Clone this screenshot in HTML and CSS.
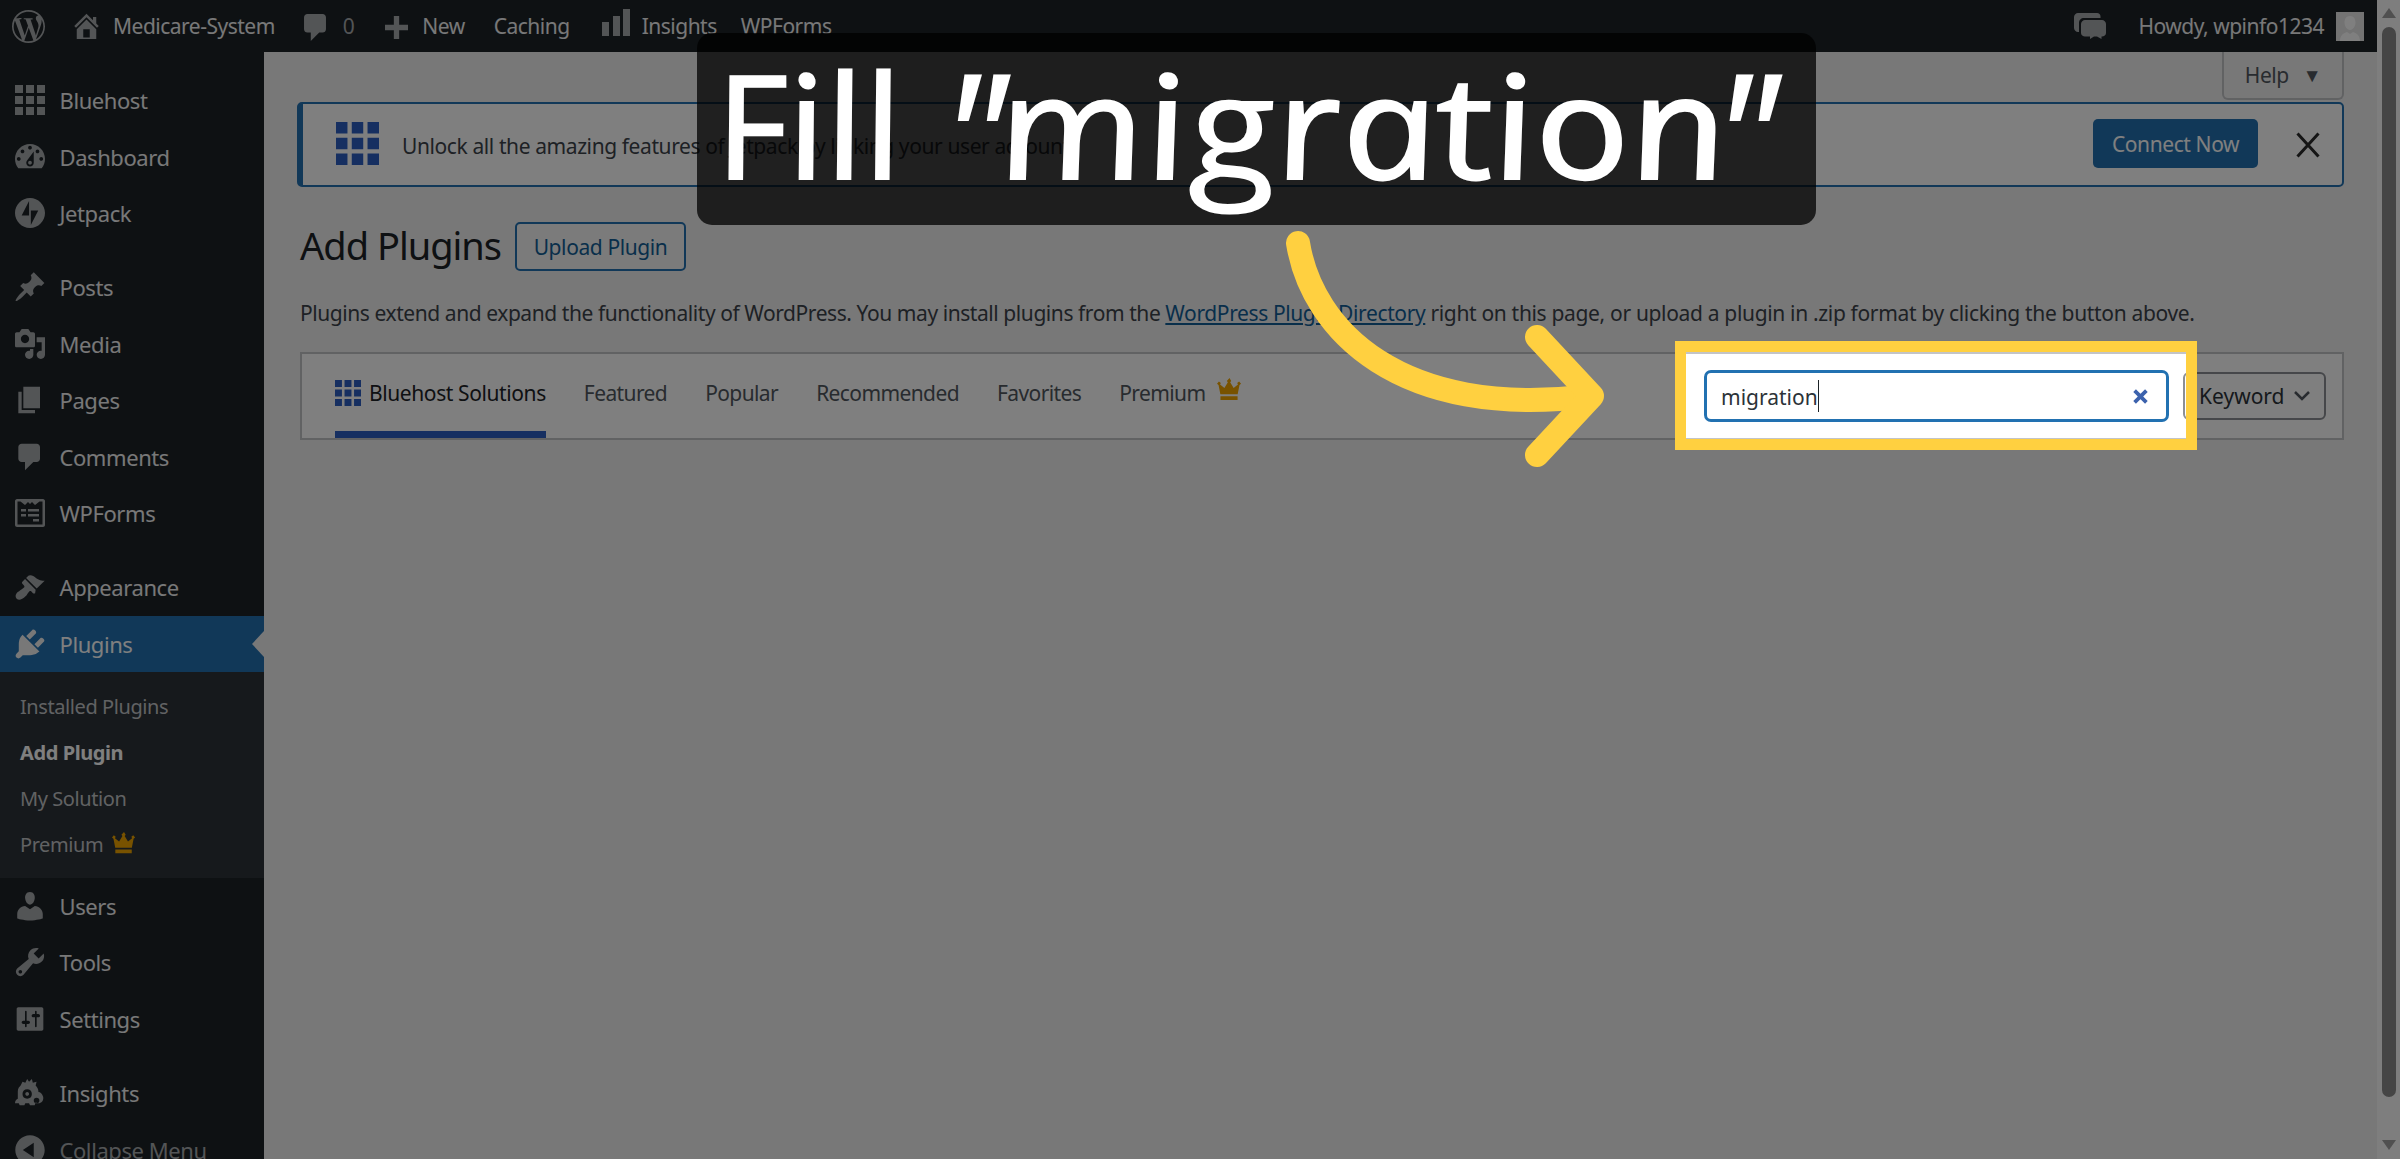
FILE: index.html
```html
<!DOCTYPE html>
<html lang="en">
<head>
<meta charset="utf-8">
<title>Add Plugins</title>
<link rel="stylesheet" href="styles.css">
</head>
<body>
<svg class="defs" aria-hidden="true">
  <symbol id="i-grid" viewBox="0 0 30 30"><path d="M0 0h8v8H0zM11 0h8v8h-8zM22 0h8v8h-8zM0 11h8v8H0zM11 11h8v8h-8zM22 11h8v8h-8zM0 22h8v8H0zM11 22h8v8h-8zM22 22h8v8h-8z"/></symbol>
  <symbol id="i-crown" viewBox="0 0 26 26"><path d="M13 0l1.8 3-1.1 1.4 3.6 6 4.5-3.6-.8-1.6L23 3.600l2 2.400-1.600 1.200-1.900 9.800H3.500L1.600 7.200 0 6l2-2.400L4 5.200l-.8 1.600 4.500 3.600 3.600-6L10.200 3zM3.600 19h17.800v4H3.600z"/></symbol>
</svg>
<div class="app">
  <header class="adminbar">
    <svg class="ab-logo" viewBox="0 0 24 24"><path d="M21.469 6.825c.84 1.537 1.318 3.3 1.318 5.175 0 3.979-2.156 7.456-5.363 9.325l3.295-9.527c.615-1.54.82-2.771.82-3.864 0-.405-.026-.78-.07-1.11m-7.981.105c.647-.03 1.232-.105 1.232-.105.582-.075.514-.93-.067-.899 0 0-1.755.135-2.88.135-1.064 0-2.85-.15-2.85-.15-.585-.03-.661.855-.075.885 0 0 .54.061 1.125.09l1.68 4.605-2.37 7.08L5.354 6.9c.649-.03 1.234-.1 1.234-.1.585-.075.516-.93-.065-.896 0 0-1.746.138-2.874.138-.2 0-.438-.008-.69-.015C4.911 3.15 8.235 1.215 12 1.215c2.809 0 5.365 1.072 7.286 2.833-.046-.003-.091-.009-.141-.009-1.06 0-1.812.923-1.812 1.914 0 .89.513 1.643 1.06 2.531.411.72.89 1.643.89 2.977 0 .915-.354 1.994-.821 3.479l-1.075 3.585-3.9-11.61.001.014zM12 22.784c-1.059 0-2.081-.153-3.048-.437l3.237-9.406 3.315 9.087c.024.053.05.101.078.149-1.12.393-2.325.609-3.582.609M1.211 12c0-1.564.336-3.05.935-4.39L7.29 21.709C3.694 19.96 1.212 16.271 1.211 12M12 0C5.385 0 0 5.385 0 12s5.385 12 12 12 12-5.385 12-12S18.615 0 12 0"/></svg>
    <a class="ab-item ab-site"><svg class="ab-home" viewBox="2 2 16 16"><path d="M16 8.500l1.530 1.530-1.060 1.060L10 4.620l-6.470 6.470-1.060-1.060L10 2.500l4 4v-2h2v4zm-6-2.460l6 5.990V18H4v-5.970zM12 17v-5H8v5h4z"/></svg>Medicare-System</a>
    <a class="ab-item ab-comments"><svg class="ab-bubble" viewBox="3 2 13 16"><path d="M5 2h9c1.100 0 2 .9 2 2v7c0 1.100-.9 2-2 2h-2l-5 5v-5H5c-1.100 0-2-.9-2-2V4c0-1.100.9-2 2-2z"/></svg><span class="ab-count">0</span></a>
    <a class="ab-item ab-new"><svg class="ab-plus" viewBox="4 2 13 13"><path d="M17 7v3h-5v5H9v-5H4V7h5V2h3v5h5z"/></svg>New</a>
    <a class="ab-item ab-caching">Caching</a>
    <a class="ab-item ab-insights"><svg class="ab-bars" viewBox="0 0 28 27"><path d="M0 13h7v14H0zM11 7h7v20h-7zM21 0h7v27h-7z"/></svg>Insights</a>
    <a class="ab-item ab-wpforms">WPForms</a>
    <span class="ab-spacer"></span>
    <svg class="ab-chat" viewBox="0 0 32 26"><path d="M4 0h19c2 0 3.500 1.500 3.500 3.500V5H10c-3 0-5 2-5 5v9H4c-2 0-4-2-4-4V4c0-2 2-4 4-4zM11 7h17c2 0 4 2 4 4v9c0 2-2 3.500-4 3.500h-.5V26L23 23.500h-3L16 26v-2.500h-5c-2 0-4-1.500-4-3.500v-9c0-2 2-4 4-4z"/></svg>
    <a class="ab-item ab-howdy">Howdy, wpinfo1234</a>
    <span class="ab-avatar"><svg viewBox="0 0 28 29"><path d="M14 4c3.500 0 5.500 2.800 5.500 6.500S17 18 14 18s-5.500-3.800-5.500-7.500S10.500 4 14 4zM4 29c0-5 3-8 7-9l3 2 3-2c4 1 7 4 7 9z"/></svg></span>
  </header>

  <div class="body-row">
    <nav class="sidebar">
      <ul class="menu">
        <li class="item"><svg class="mi mi-bh"><use href="#i-grid"/></svg>Bluehost</li>
        <li class="item"><svg class="mi" viewBox="2 2 16 16"><path d="M3.760 16h12.480c1.100-1.370 1.760-3.110 1.760-5 0-4.420-3.580-8-8-8s-8 3.580-8 8c0 1.890.66 3.630 1.760 5zM10 4c.55 0 1 .45 1 1s-.45 1-1 1-1-.45-1-1 .45-1 1-1zM6 6c.55 0 1 .45 1 1s-.45 1-1 1-1-.45-1-1 .45-1 1-1zm8 0c.55 0 1 .45 1 1s-.45 1-1 1-1-.45-1-1 .45-1 1-1zm-5.370 5.550L12 7v6c0 1.100-.9 2-2 2s-2-.9-2-2c0-.57.24-1.080.63-1.450zM4 10c.55 0 1 .45 1 1s-.45 1-1 1-1-.45-1-1 .45-1 1-1zm12 0c.55 0 1 .45 1 1s-.45 1-1 1-1-.45-1-1 .45-1 1-1zm-5 3c0-.55-.45-1-1-1s-1 .45-1 1 .45 1 1 1 1-.45 1-1z"/></svg>Dashboard</li>
        <li class="item sep-after"><svg class="mi mi-jp" viewBox="0 0 32 32"><path fill-rule="evenodd" d="M16 0C7.200 0 0 7.200 0 16s7.200 16 16 16 16-7.200 16-16S24.800 0 16 0zm-1 18.700H7.100l7.900-15.400zm1.900-5.400h7.900l-7.900 15.400z"/></svg>Jetpack</li>
        <li class="item"><svg class="mi" viewBox="1 1 18 18"><path d="M10.440 3.020l1.820-1.820 6.360 6.350-1.830 1.820c-1.050-.68-2.480-.57-3.410.36l-.75.75c-.92.93-1.040 2.350-.35 3.410l-1.830 1.820-2.410-2.410-2.800 2.790c-.42.42-3.380 2.710-3.800 2.290s1.860-3.390 2.280-3.810l2.790-2.790L4.100 9.360l1.830-1.820c1.050.69 2.480.57 3.400-.36l.75-.75c.93-.92 1.050-2.350.36-3.410z"/></svg>Posts</li>
        <li class="item"><svg class="mi" viewBox="1 1 18 18"><path fill-rule="evenodd" d="M13 11V4c0-.55-.45-1-1-1h-1.670L9 1H5L3.670 3H2c-.55 0-1 .45-1 1v7c0 .55.45 1 1 1h10c.55 0 1-.45 1-1zM7 4.500c1.380 0 2.500 1.120 2.500 2.500S8.380 9.500 7 9.500 4.500 8.380 4.500 7 5.620 4.500 7 4.500zM14 6h5v10.500c0 1.380-1.120 2.500-2.500 2.500S14 17.880 14 16.500s1.120-2.500 2.500-2.500c.17 0 .34.02.5.05V9h-3zm-4 8.050V13h2v3.500c0 1.380-1.120 2.500-2.500 2.500S7 17.880 7 16.500 8.120 14 9.500 14c.17 0 .34.02.5.05z"/></svg>Media</li>
        <li class="item"><svg class="mi" viewBox="1 1 18 18"><path d="M6 15V2h10v13zm-1 1h8v2H3V5h2z"/></svg>Pages</li>
        <li class="item"><svg class="mi" viewBox="1 1 18 18"><path d="M5 2h9c1.100 0 2 .9 2 2v7c0 1.100-.9 2-2 2h-2l-5 5v-5H5c-1.100 0-2-.9-2-2V4c0-1.100.9-2 2-2z"/></svg>Comments</li>
        <li class="item sep-after"><svg class="mi" viewBox="0 0 30 30"><path fill-rule="evenodd" d="M2 1h26c1 0 2 1 2 2v24c0 1-1 2-2 2H2c-1 0-2-1-2-2V3c0-1 1-2 2-2zm.5 2.500v23h25v-23h-3L20 7l-3-3-2 2-2-2-3 3-4.500-3.500zM6 11h5v2.500H6zm7 0h11v2.500H13zm-7 5h5v2.500H6zm7 0h11v2.500H13zm5 5h6v2.500h-6z"/></svg>WPForms</li>
        <li class="item"><svg class="mi" viewBox="0 0 20 20"><path d="M14.480 11.060L7.410 3.990l1.500-1.500c.5-.56 2.300-.47 3.510.32 1.210.8 1.430 1.280 2.910 2.100 1.180.64 2.450 1.260 4.450.85zm-.71.71L6.700 4.700 4.930 6.470c-.39.39-.39 1.020 0 1.410l1.060 1.060c.39.39.39 1.030 0 1.420-.6.6-1.430 1.110-2.210 1.690-.35.26-.7.53-1.010.84C1.430 13.230.4 14.980.4 16.080c0 1.450 1.070 2.500 2.510 2.500.96 0 2.770-.95 4.100-2.340.29-.29.56-.64.82-.99.58-.78 1.090-1.610 1.690-2.210.39-.39 1.020-.39 1.410 0l1.060 1.060c.39.39 1.030.39 1.420 0z"/></svg>Appearance</li>
        <li class="item active"><svg class="mi" viewBox="2 2 16 16"><path d="M13.110 4.360L9.870 7.600 8 5.730l3.240-3.240c.35-.34 1.050-.2 1.560.32.52.51.66 1.210.31 1.550zm-8 1.770l.91-1.120 9.010 9.010-1.190.84c-.71.71-2.630 1.160-3.820 1.160H6.140L4.900 17.260c-.59.59-1.540.59-2.120 0-.59-.58-.59-1.530 0-2.120l1.240-1.240v-3.880c0-1.130.4-3.190 1.090-3.890zm7.260 3.970l3.240-3.240c.34-.35 1.040-.21 1.550.31.52.51.66 1.210.31 1.550l-3.240 3.250z"/></svg>Plugins</li>
        <li class="submenu">
          <a class="sub">Installed Plugins</a>
          <a class="sub sub-current">Add Plugin</a>
          <a class="sub">My Solution</a>
          <a class="sub">Premium<svg class="crown sub-crown"><use href="#i-crown"/></svg></a>
        </li>
        <li class="item"><svg class="mi" viewBox="2 1.500 16 17"><path d="M10 9.250c-2.270 0-2.730-3.440-2.730-3.440C7 4.020 7.820 2 9.970 2c2.160 0 2.980 2.020 2.710 3.810 0 0-.41 3.440-2.680 3.440zm0 2.570L12.720 10c2.390 0 4.520 2.330 4.520 4.530v2.490s-3.650 1.130-7.240 1.130c-3.650 0-7.240-1.130-7.240-1.130v-2.490c0-2.250 1.940-4.480 4.470-4.480z"/></svg>Users</li>
        <li class="item"><svg class="mi" viewBox="1.500 1.500 17 17"><path fill-rule="evenodd" d="M16.680 9.770c-1.340 1.340-3.300 1.670-4.950.99l-5.410 6.520c-.99.99-2.590.99-3.580 0s-.99-2.590 0-3.570l6.520-5.420c-.68-1.650-.35-3.610.99-4.950 1.280-1.280 3.120-1.620 4.720-1.060l-2.890 2.890 2.820 2.820 2.860-2.870c.53 1.580.18 3.390-1.080 4.650zM3.810 16.210c.4.39 1.040.39 1.430 0 .4-.4.4-1.040 0-1.430-.39-.4-1.030-.4-1.430 0-.39.39-.39 1.030 0 1.430z"/></svg>Tools</li>
        <li class="item sep-after"><svg class="mi" viewBox="1 1 18 18"><path d="M18 16V4c0-.55-.45-1-1-1H3c-.55 0-1 .45-1 1v12c0 .55.45 1 1 1h14c.55 0 1-.45 1-1zM8 11h1c.55 0 1 .45 1 1s-.45 1-1 1H8v1.500c0 .28-.22.5-.5.5s-.5-.22-.5-.5V13H6c-.55 0-1-.45-1-1s.45-1 1-1h1V5.500c0-.28.22-.5.5-.5s.5.22.5.5V11zm5-2h-1c-.55 0-1-.45-1-1s.45-1 1-1h1V5.500c0-.28.22-.5.5-.5s.5.22.5.5V7h1c.55 0 1 .45 1 1s-.45 1-1 1h-1v5.500c0 .28-.22.5-.5.5s-.5-.22-.5-.5V9z"/></svg>Settings</li>
        <li class="item"><svg class="mi mi-ins" viewBox="0 0 32 32"><path fill-rule="evenodd" d="M8 4l3 1 2-4 2 3 3-3 1 4 4-1-1 4c2 2 3 4 3 7 2 0 4 2 5 5 1 4-2 7-5 7l-3-1-1 3h-5l-1-2H11l-1 2H5l-1-2H0c0-3 1-4 3-5V14c0-3 2-5 3-6zm5 8c-3 0-5 2-5 5s2 5 5 5 5-2 5-5-2-5-5-5zm0 3c1 0 2 1 2 2s-1 2-2 2-2-1-2-2 1-2 2-2zm10 6c-2 0-3 1-3 3s1 3 3 3 3-1 3-3-1-3-3-3z"/></svg>Insights</li>
        <li class="item item-collapse"><svg class="mi" viewBox="2 2 16 16"><path fill-rule="evenodd" d="M10 2.160c4.330 0 7.840 3.510 7.840 7.840s-3.510 7.840-7.840 7.840S2.160 14.330 2.160 10 5.710 2.160 10 2.160zm2 11.720V6.120L6.180 9.970z"/></svg>Collapse Menu</li>
      </ul>
    </nav>

    <main class="content">
      <div class="help-row"><button class="help-tab">Help <span class="help-arrow">▼</span></button></div>
      <section class="notice">
        <svg class="notice-icon"><use href="#i-grid"/></svg>
        <p class="notice-text">Unlock all the amazing features of Jetpack by linking your user account.</p>
        <button class="btn-connect">Connect Now</button>
        <svg class="notice-close" viewBox="0 0 24 26"><path d="M1.500 1.500l21 23M22.500 1.500l-21 23"/></svg>
      </section>
      <div class="title-row">
        <h1 class="page-title">Add Plugins</h1>
        <button class="btn-upload">Upload Plugin</button>
      </div>
      <p class="intro"><span class="intro-a">Plugins extend and expand the functionality of WordPress. You may install plugins from the </span><a class="intro-link">WordPress Plugin Directory</a><span class="intro-b"> right on this page, or upload a plugin in .zip format by clicking the button above.</span></p>
      <section class="filter">
        <ul class="tabs">
          <li class="tab tab-current"><svg class="tab-grid"><use href="#i-grid"/></svg>Bluehost Solutions</li>
          <li class="tab">Featured</li>
          <li class="tab">Popular</li>
          <li class="tab">Recommended</li>
          <li class="tab">Favorites</li>
          <li class="tab">Premium<svg class="crown tab-crown"><use href="#i-crown"/></svg></li>
        </ul>
        <div class="search">
          <div class="search-input"><span class="search-value">migration</span><span class="caret"></span>
            <svg class="search-clear" viewBox="0 0 14 14"><path d="M1.500 1.500l11 11M12.500 1.500l-11 11"/></svg>
          </div>
          <div class="search-type">Keyword<svg class="chev" viewBox="0 0 16 10"><path d="M1 1l7 7 7-7"/></svg></div>
        </div>
      </section>
      <footer class="page-footer"><span>Thank you for creating with <a class="intro-link">WordPress</a>.</span><span>Version 6.8</span></footer>
    </main>
  </div>
</div>
<aside class="scrollbar">
  <span class="sb-arrow sb-up"></span>
  <span class="sb-thumb"></span>
  <span class="sb-arrow sb-down"></span>
</aside>

<div class="tour">
  <div class="spot"></div>
  <svg class="tour-arrow" viewBox="0 0 2400 1159"><path d="M1298 243C1312 330 1400 420 1590 396"/><path d="M1537 337L1592 396L1537 455"/></svg>
  <div class="callout"><span class="callout-text"><span class="up up-fill">Fill</span> <i class="q q-open">"</i><span class="up up-wide">migration</span><i class="q q-close">"</i></span></div>
</div>
</body>
</html>
```

FILE: styles.css
```css
* { box-sizing: border-box; }
html, body { height: 100%; }
body {
  margin: 0;
  display: flex;
  height: 1159px;
  overflow: hidden;
  background: #f0f0f1;
  font-family: "Noto Sans", "Open Sans", sans-serif;
  font-size: 21px;
  color: #3c434a;
  position: relative;
}
.defs { position: absolute; width: 0; height: 0; }
ul { list-style: none; margin: 0; padding: 0; }
p, h1 { margin: 0; }
button { font: inherit; background: none; cursor: pointer; }
svg { fill: currentColor; flex: none; display: block; }

.app { flex: 1; min-width: 0; display: flex; flex-direction: column; }

/* admin bar */
.adminbar {
  height: 52px;
  flex: none;
  display: flex;
  align-items: center;
  background: #1d2327;
  color: #f0f0f1;
  padding-left: 12px;
  letter-spacing: -.5px;
}
.adminbar svg { color: #a7aaad; }
.ab-logo { width: 33px; height: 33px; margin-right: 28px; }
.ab-item { display: flex; align-items: center; white-space: nowrap; }
.ab-home { width: 27px; height: 26px; margin-right: 13px; }
.ab-bubble { width: 24px; height: 27px; margin: 3px 16px 0 28px; }
.ab-count { color: #a7aaad; }
.ab-plus { width: 23px; height: 23px; margin: 2px 14px 0 31px; }
.ab-caching { margin-left: 29px; }
.ab-bars { width: 28px; height: 27px; margin: 0 12px 8px 32px; }
.ab-wpforms { margin-left: 24px; }
.ab-spacer { flex: 1; }
.ab-chat { width: 32px; height: 26px; margin-right: 32px; }
.ab-avatar { width: 28px; height: 29px; margin: 0 13px 0 12px; background: #e6e6e6; overflow: hidden; }
.adminbar .ab-avatar svg { width: 28px; height: 29px; color: #fff; }

.body-row { flex: 1; min-height: 0; display: flex; }

/* sidebar */
.sidebar { width: 264px; flex: none; background: #1d2327; color: #f0f0f1; overflow: hidden; padding-top: 20px; font-size: 22px; letter-spacing: -.42px; }
.item { height: 56.4px; display: flex; align-items: center; gap: 14.5px; padding-left: 15px; position: relative; }
.sep-after { margin-bottom: 18px; }
.mi { width: 30px; height: 30px; color: #a7aaad; padding: 0; }
.active { background: #2271b1; color: #fff; }
.active .mi { color: #f0f0f1; }
.active::after {
  content: "";
  position: absolute;
  right: 0;
  top: 50%;
  margin-top: -13px;
  border: 13px solid transparent;
  border-left-width: 0;
  border-right: 12px solid #f0f0f1;
}
.submenu { background: #2c3338; padding: 11.5px 0 10.5px; font-size: 20px; color: #c3c4c7; }
.sub { height: 46px; display: flex; align-items: center; padding-left: 20px; }
.sub-current { font-weight: 700; color: #fff; }
.crown { color: #f0a500; }
.sub-crown { width: 24px; height: 24px; margin-left: 9px; }
.item-collapse { color: #a7aaad; }

/* content */
.content { flex: 1; min-width: 0; display: flex; flex-direction: column; padding: 0 33px 0 36px; overflow: hidden; }
.help-row { display: flex; justify-content: flex-end; flex: none; }
.help-tab {
  width: 122px; height: 48px;
  display: flex; align-items: center; justify-content: center; gap: 14px;
  border: 2px solid #c3c4c7; border-top: 0;
  border-radius: 0 0 6px 6px;
  color: #50575e; background: #f0f0f1;
  letter-spacing: -.4px;
}
.help-arrow { font-size: 19px; }
.notice {
  flex: none; height: 85px; margin-top: 2px; margin-left: -3px;
  display: flex; align-items: center;
  background: #fff;
  border: 2px solid #2271b1; border-left-width: 6px; border-radius: 5px;
  padding: 0 22px 0 33px;
}
.notice-icon { width: 43px; height: 43px; color: #2c5fc3; margin: -3px 23px 0 0; }
.notice-text { flex: 1; letter-spacing: -.4px; padding-top: 3px; }
.btn-connect {
  width: 165px; height: 49px;
  background: #2271b1; color: #fff; border: 0; border-radius: 5px;
  margin: -2px 38px 0 0; letter-spacing: -.4px; padding: 0;
}
.notice-close { width: 24px; height: 26px; fill: none; stroke: #2a2a2a; stroke-width: 3; }
.title-row { flex: none; display: flex; align-items: center; gap: 14px; margin-top: 35px; height: 49px; }
.page-title { font-size: 38px; font-weight: 400; color: #1d2327; letter-spacing: -1px; margin-top: -4px; }
.btn-upload {
  width: 171px; height: 49px; padding: 0;
  border: 2px solid #2271b1; border-radius: 5px; background: #f6f7f7; color: #135e96;
  letter-spacing: -.4px;
}
.intro { flex: none; margin-top: 26px; line-height: 32px; white-space: nowrap; letter-spacing: -.38px; }
.intro-a { letter-spacing: -.43px; }
.intro-b { letter-spacing: -.33px; }
.intro-link { color: #135e96; text-decoration: underline; }
.filter {
  flex: none; margin-top: 23px; height: 88px;
  display: flex; align-items: stretch; justify-content: space-between;
  background: #fff; border: 2px solid #c3c4c7;
  padding-left: 33px;
}
.tabs { display: flex; gap: 38px; color: #50575e; letter-spacing: -.6px; }
.tab { display: flex; align-items: center; height: 84px; padding-bottom: 6px; }
.tab-current { color: #1d2327; border-bottom: 7px solid #2c5fc3; padding-bottom: 0; letter-spacing: -.4px; }
.tab-grid { width: 26px; height: 26px; color: #2c5fc3; margin-right: 8px; }
.tab-crown { width: 25px; height: 25px; margin: -5px 0 0 11px; }
.search { display: flex; align-items: center; gap: 14px; padding-right: 16px; }
.search-input {
  width: 465px; height: 52px;
  display: flex; align-items: center;
  background: #fff; border: 3px solid #2271b1; border-radius: 7px;
  padding: 0 18px 0 14px;
  color: #2c3338;
}
.caret { width: 1.500px; height: 32px; background: #1d2327; }
.search-value { padding-top: 2px; }
.search-clear { width: 15px; height: 15px; margin-left: auto; fill: none; stroke: #3c62ad; stroke-width: 3.500; }
.search-type {
  width: 143px; height: 48px;
  display: flex; align-items: center; justify-content: space-between;
  border: 2px solid #8c8f94; border-radius: 6px; background: #fff;
  padding: 0 14px;
  color: #2c3338;
}
.chev { width: 16px; height: 10px; fill: none; stroke: #50575e; stroke-width: 2.500; }
.page-footer { margin-top: auto; margin-bottom: -16px; display: flex; justify-content: space-between; flex: none; height: 16px; line-height: 16px; color: #50575e; letter-spacing: -.4px; }

/* scrollbar */
.scrollbar { width: 23px; flex: none; display: flex; flex-direction: column; align-items: center; background: #fdfdfd; padding-top: 8px; }
.sb-arrow { width: 0; height: 0; border: 7px solid transparent; flex: none; }
.sb-up { border-top: 0; border-bottom: 10px solid #a0a0a0; }
.sb-thumb { width: 14px; height: 1070px; margin-top: 9px; background: #8a8a8a; border-radius: 7px; flex: none; }
.sb-down { margin-top: 43px; border-bottom: 0; border-top: 10px solid #a0a0a0; }

/* tour overlay */
.tour { position: absolute; inset: 0; overflow: hidden; pointer-events: none; }
.spot {
  position: absolute; left: 1675px; top: 341px; width: 522px; height: 109px;
  border: 11px solid #ffd040;
  box-shadow: 0 0 0 3000px rgba(0, 0, 0, .5);
}
.tour-arrow { position: absolute; inset: 0; width: 2400px; height: 1159px; fill: none; stroke: #ffd040; stroke-width: 24; stroke-linecap: round; stroke-linejoin: round; }
.callout {
  position: absolute; left: 697px; top: 33px; width: 1119px; height: 192px;
  background: rgba(0, 0, 0, .75); border-radius: 15px;
  color: #fff; padding-left: 24px;
}
.callout-text {
  display: block; font-family: "Open Sans", "Noto Sans", sans-serif; font-style: italic; font-size: 144px; font-weight: 500; line-height: 180px;
  white-space: nowrap;
  -webkit-text-stroke: 2px #fff;
}
.up { display: inline-block; transform: skewX(12deg); transform-origin: 0 75%; }
.up-fill { transform: skewX(12deg) scaleX(1.05); }
.up-wide { transform: skewX(12deg) scaleX(1.17); margin-right: 97px; }
.q { font-size: 172px; line-height: 0; vertical-align: -20px; }
.q-open { margin-left: 4px; margin-right: -2px; }
.q-close { margin-left: -12px; }
```
